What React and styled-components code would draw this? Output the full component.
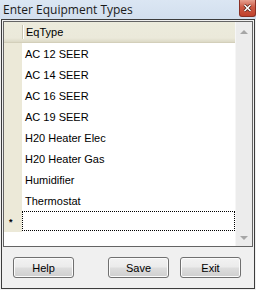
import React from 'react'
import styled, { createGlobalStyle } from 'styled-components'

const GlobalStyle = createGlobalStyle`
  html, body {
    margin: 0;
    padding: 0;
    background: #f0f0f0;
  }
`

const Window = styled.div`
  width: 256px;
  height: 290px;
  display: flex;
  flex-direction: column;
  background: #f0f0f0;
  font-family: "Liberation Sans", Arial, sans-serif;
  font-size: 11px;
  color: #000;
  overflow: hidden;
`

const TitleBar = styled.div`
  height: 19px;
  flex: none;
  display: flex;
  align-items: flex-start;
  justify-content: space-between;
  background: linear-gradient(#dbe6f3, #d2dfee);
`

const Title = styled.span`
  padding: 2px 0 0 3px;
  font-family: "Open Sans", "Noto Sans", sans-serif;
  font-size: 12px;
  line-height: 15px;
  color: #1a1a1a;
`

const CloseButton = styled.div`
  width: 17px;
  height: 17px;
  box-sizing: border-box;
  border: 1px solid #8a3024;
  border-top: none;
  border-radius: 0 0 3px 3px;
  background: linear-gradient(#e6a090, #cd5a45 45%, #c0412c);
  display: flex;
  align-items: center;
  justify-content: center;
`

const Client = styled.div`
  flex: 1;
  margin: 0 1px 1px 1px;
  border: 1px solid #3c3c3c;
  padding: 1px 1px 0 1px;
  display: flex;
  flex-direction: column;
`

const Grid = styled.div`
  height: 226px;
  box-sizing: border-box;
  border: 1px solid #646464;
  background: #fff;
  display: flex;
`

const Table = styled.div`
  flex: 1;
  display: flex;
  flex-direction: column;
`

const HeaderRow = styled.div`
  height: 21px;
  display: flex;
  background: linear-gradient(#ecebdc 0, #ebe9da 80%, #dcd9c6 100%);
  border-bottom: 1px solid #d3cfba;
  box-sizing: border-box;
`

const CornerCell = styled.div`
  width: 18px;
  flex: none;
`

const ColumnHeader = styled.div`
  flex: 1;
  display: flex;
  align-items: center;
  padding-left: 3px;
  border-left: 1px solid #c9c6b2;
  box-shadow: inset 1px 0 0 #fff;
  margin: 3px 0;
  line-height: 13px;
`

const Row = styled.div`
  height: 21px;
  display: flex;
`

const RowHeader = styled.div`
  width: 18px;
  flex: none;
  background: #ece9d8;
  display: flex;
  align-items: center;
  font-size: 9px;
  font-weight: bold;
  padding-left: 5px;
  box-sizing: border-box;
`

const Cell = styled.div`
  flex: 1;
  display: flex;
  align-items: center;
  padding-left: 3px;
  margin: ${(p) => (p.$focused ? '0 0 1px 0' : '0')};
  outline: ${(p) => (p.$focused ? '1px dotted #000' : 'none')};
  outline-offset: -1px;
`

const ScrollBar = styled.div`
  width: 17px;
  flex: none;
  background: #ececec;
  border-left: 1px solid #f6f6f6;
  box-sizing: border-box;
  display: flex;
  flex-direction: column;
  justify-content: space-between;
  align-items: center;
  padding: 8px 0 6px;
`

const Arrow = styled.div`
  width: 0;
  height: 0;
  border-left: 4px solid transparent;
  border-right: 4px solid transparent;
  ${(p) =>
    p.$down
      ? 'border-top: 4px solid #a6a6a6;'
      : 'border-bottom: 4px solid #a6a6a6;'}
`

const ButtonRow = styled.div`
  display: flex;
  padding: 10px 0 0 10px;
`

const Button = styled.button`
  width: 61px;
  height: 21px;
  margin-left: ${(p) => p.$offset || 0}px;
  box-sizing: border-box;
  border: 1px solid #707070;
  border-radius: 3px;
  background: linear-gradient(#f2f2f2 0, #ebebeb 48%, #dddddd 52%, #cfcfcf 100%);
  box-shadow: inset 0 0 0 1px #fbfbfb;
  font-family: "Liberation Sans", Arial, sans-serif;
  font-size: 11px;
  color: #000;
  padding: 0;
`

const items = [
  'AC 12 SEER',
  'AC 14 SEER',
  'AC 16 SEER',
  'AC 19 SEER',
  'H20 Heater Elec',
  'H20 Heater Gas',
  'Humidifier',
  'Thermostat'
]

export default function App() {
  return (
    <>
      <GlobalStyle />
      <Window>
        <TitleBar>
          <Title>Enter Equipment Types</Title>
          <CloseButton>
            <svg width="9" height="8" viewBox="0 0 9 8">
              <path d="M1.5 1 L7.5 7 M7.5 1 L1.5 7" stroke="#4a1a12" strokeWidth="3" />
              <path d="M1.5 1 L7.5 7 M7.5 1 L1.5 7" stroke="#fff" strokeWidth="1.6" />
            </svg>
          </CloseButton>
        </TitleBar>
        <Client>
          <Grid>
            <Table>
              <HeaderRow>
                <CornerCell />
                <ColumnHeader>EqType</ColumnHeader>
              </HeaderRow>
              {items.map((item) => (
                <Row key={item}>
                  <RowHeader />
                  <Cell>{item}</Cell>
                </Row>
              ))}
              <Row>
                <RowHeader>*</RowHeader>
                <Cell $focused />
              </Row>
            </Table>
            <ScrollBar>
              <Arrow />
              <Arrow $down />
            </ScrollBar>
          </Grid>
          <ButtonRow>
            <Button>Help</Button>
            <Button $offset={34}>Save</Button>
            <Button $offset={11}>Exit</Button>
          </ButtonRow>
        </Client>
      </Window>
    </>
  )
}
